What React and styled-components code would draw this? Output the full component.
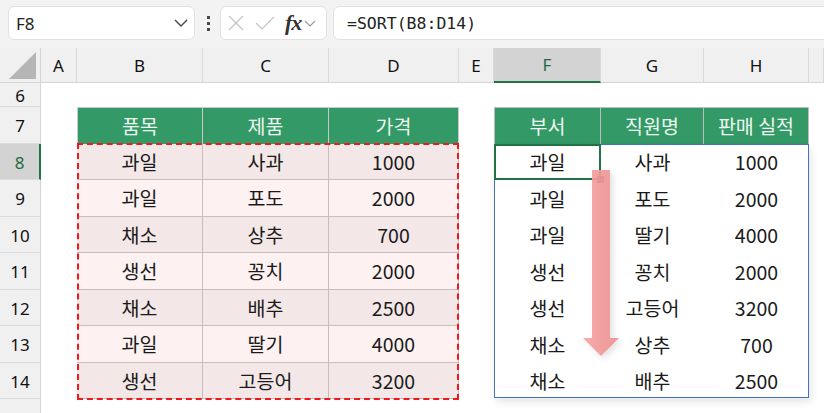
import styled, { createGlobalStyle, css } from "styled-components";

const GlobalStyle = createGlobalStyle`
  html, body {
    margin: 0;
    padding: 0;
    background: #ffffff;
    overflow: hidden;
  }
  body {
    font-family: "Noto Sans", "Noto Sans CJK KR", sans-serif;
  }
`;

const COLS = ["A", "B", "C", "D", "E", "F", "G", "H", ""];

const leftData = [
  ["과일", "사과", "1000"],
  ["과일", "포도", "2000"],
  ["채소", "상추", "700"],
  ["생선", "꽁치", "2000"],
  ["채소", "배추", "2500"],
  ["과일", "딸기", "4000"],
  ["생선", "고등어", "3200"],
];

const rightData = [
  ["과일", "사과", "1000"],
  ["과일", "포도", "2000"],
  ["과일", "딸기", "4000"],
  ["생선", "꽁치", "2000"],
  ["생선", "고등어", "3200"],
  ["채소", "상추", "700"],
  ["채소", "배추", "2500"],
];

const App = () => {
  const rows = [];
  for (let r = 6; r <= 15; r++) rows.push(r);

  const renderRow = (r) => {
    const cells = [];
    // row 15 is only a sliver at the bottom edge, its number sits below the window
    cells.push(
      <RowHead key={`rh${r}`} $selected={r === 8}>
        {r < 15 ? r : ""}
      </RowHead>
    );
    cells.push(<Blank key={`a${r}`} />);
    if (r === 7) {
      ["품목", "제품", "가격"].forEach((t, i) =>
        cells.push(
          <LeftHead key={`lh${i}`} $first={i === 0}>
            {t}
          </LeftHead>
        )
      );
    } else if (r >= 8 && r <= 14) {
      leftData[r - 8].forEach((t, i) =>
        cells.push(
          <LeftBody key={`lb${r}${i}`} $alt={(r - 8) % 2 === 1}>
            {t}
          </LeftBody>
        )
      );
    } else {
      for (let i = 0; i < 3; i++) cells.push(<Blank key={`bl${r}${i}`} />);
    }
    cells.push(<Blank key={`e${r}`} />);
    if (r === 7) {
      ["부서", "직원명", "판매 실적"].forEach((t, i) =>
        cells.push(
          <RightHead key={`rhh${i}`} $first={i === 0}>
            {t}
          </RightHead>
        )
      );
    } else if (r >= 8 && r <= 14) {
      rightData[r - 8].forEach((t, i) =>
        cells.push(<RightBody key={`rb${r}${i}`}>{t}</RightBody>)
      );
    } else {
      for (let i = 0; i < 3; i++) cells.push(<Blank key={`br${r}${i}`} />);
    }
    cells.push(<Blank key={`z${r}`} />);
    return cells;
  };

  return (
    <>
      <GlobalStyle />
      <Page>
        <TopBar>
          <NameBox>
            <span>F8</span>
            <svg width="14" height="8" viewBox="0 0 14 8">
              <path d="M1 1 L7 7 L13 1" fill="none" stroke="#444" strokeWidth="1.4" />
            </svg>
          </NameBox>
          <Dots>
            <i />
            <i />
            <i />
          </Dots>
          <FuncBox>
            <svg width="16" height="16" viewBox="0 0 16 16">
              <path d="M1 1 L15 15 M15 1 L1 15" stroke="#c4c4c4" strokeWidth="1.2" fill="none" />
            </svg>
            <svg width="20" height="14" viewBox="0 0 20 14">
              <path d="M1 7 L7 13 L19 1" stroke="#c4c4c4" strokeWidth="1.2" fill="none" />
            </svg>
            <Fx>fx</Fx>
            <svg width="12" height="7" viewBox="0 0 12 7">
              <path d="M1 1 L6 6 L11 1" fill="none" stroke="#999" strokeWidth="1.1" />
            </svg>
          </FuncBox>
          <FormulaBox>=SORT(B8:D14)</FormulaBox>
        </TopBar>

        <Sheet>
          <CellGrid>
            <Corner>
              <svg width="27" height="27" viewBox="0 0 27 27">
                <polygon points="27,0 27,27 0,27" fill="#b5b5b5" />
              </svg>
            </Corner>
            {COLS.map((c) => (
              <ColHead key={c || "I"} $selected={c === "F"}>
                {c}
              </ColHead>
            ))}
            {rows.map(renderRow)}
          </CellGrid>

          <OverlayGrid>
            <DashedFrame />
            <BlueFrame />
            <SelectFrame>
              <Handle />
            </SelectFrame>
          </OverlayGrid>
        </Sheet>

        <Arrow width="40" height="192" viewBox="0 0 40 192">
          <defs>
            <linearGradient id="shaft" x1="0" x2="1" y1="0" y2="0">
              <stop offset="0" stopColor="#f7a3a3" />
              <stop offset="1" stopColor="#ee9191" />
            </linearGradient>
          </defs>
          <polygon
            points="11,0 29,0 29,168 38,168 20,186 2,168 11,168"
            fill="url(#shaft)"
            fillOpacity="0.92"
          />
        </Arrow>
      </Page>
    </>
  );
};

export default App;

const Page = styled.div`
  position: relative;
  width: 824px;
  height: 413px;
  overflow: hidden;
  background: #ffffff;
  color: #1a1a1a;
`;

const TopBar = styled.div`
  display: flex;
  align-items: center;
  height: 48px;
  padding: 0 0 2px 8px;
  box-sizing: border-box;
  background: #f3f3f3;
`;

const NameBox = styled.div`
  display: flex;
  align-items: center;
  justify-content: space-between;
  width: 187px;
  height: 34px;
  box-sizing: border-box;
  padding: 0 6px 0 7px;
  background: #ffffff;
  border: 1px solid #e1e1e1;
  border-radius: 6px;
  font-size: 17px;
  color: #222;
`;

const Dots = styled.div`
  display: flex;
  flex-direction: column;
  gap: 3px;
  margin: 0 10px 0 12px;

  i {
    display: block;
    width: 3px;
    height: 3px;
    background: #4a4a4a;
  }
`;

const FuncBox = styled.div`
  display: flex;
  align-items: center;
  width: 107px;
  height: 34px;
  box-sizing: border-box;
  padding: 0 2px 0 7px;
  background: #ffffff;
  border: 1px solid #e1e1e1;
  border-radius: 6px;

  svg:nth-child(1) {
    margin-right: 11px;
  }
  svg:nth-child(2) {
    margin-right: 10px;
  }
`;

const Fx = styled.span`
  font-family: "Liberation Serif", "DejaVu Serif", serif;
  font-style: italic;
  font-weight: bold;
  font-size: 22px;
  line-height: 1;
  color: #333;
  margin-right: 3px;
  letter-spacing: -1px;
`;

const FormulaBox = styled.div`
  flex: 1;
  display: flex;
  align-items: center;
  height: 34px;
  box-sizing: border-box;
  margin-left: 6px;
  margin-right: -12px;
  padding-left: 13px;
  background: #ffffff;
  border: 1px solid #e1e1e1;
  border-radius: 6px;
  font-family: "DejaVu Sans Mono", "Liberation Mono", monospace;
  font-size: 16.5px;
  color: #222;
`;

const gridTemplate = css`
  display: grid;
  grid-template-columns: 41px 36px 126px 126px 130px 35px 107px 103px 105px 1fr;
  grid-template-rows: 35px 24px repeat(9, 36.5px);
`;

const Sheet = styled.div`
  display: grid;
  font-family: "Noto Sans CJK KR", "Noto Sans", sans-serif;
`;

const CellGrid = styled.div`
  ${gridTemplate};
  grid-area: 1 / 1;
`;

const OverlayGrid = styled.div`
  ${gridTemplate};
  grid-area: 1 / 1;
  pointer-events: none;
  z-index: 1;
`;

const Corner = styled.div`
  display: flex;
  align-items: flex-end;
  justify-content: flex-end;
  padding: 0 4px 3px 0;
  box-sizing: border-box;
  background: #f0f0f0;
  border-right: 1px solid #d4d4d4;
  border-bottom: 1px solid #d4d4d4;
`;

const ColHead = styled.div`
  display: flex;
  align-items: center;
  justify-content: center;
  box-sizing: border-box;
  font-family: "Noto Sans", sans-serif;
  font-size: 17px;
  background: ${(p) => (p.$selected ? "#d3d3d3" : "#f0f0f0")};
  color: ${(p) => (p.$selected ? "#1d6b40" : "#111")};
  border-right: 1px solid #d9d9d9;
  border-bottom: ${(p) => (p.$selected ? "2px solid #217346" : "1px solid #d4d4d4")};
`;

const RowHead = styled.div`
  display: flex;
  align-items: center;
  justify-content: center;
  box-sizing: border-box;
  padding-top: 2px;
  font-family: "Noto Sans", sans-serif;
  font-size: 17px;
  background: ${(p) => (p.$selected ? "#d3d3d3" : "#f0f0f0")};
  color: ${(p) => (p.$selected ? "#1d6b40" : "#111")};
  border-right: ${(p) => (p.$selected ? "2px solid #217346" : "1px solid #d4d4d4")};
  border-bottom: 1px solid #dcdcdc;
`;

const Blank = styled.div`
  background: #ffffff;
`;

const CellBase = styled.div`
  display: flex;
  align-items: center;
  justify-content: center;
  box-sizing: border-box;
  font-size: 19.5px;
  line-height: 1;
  white-space: nowrap;
`;

const LeftHead = styled(CellBase)`
  background: #339966;
  color: #eef8f1;
  border-top: 1px solid #c9c9c9;
  border-right: 1px solid #c9c9c9;
  border-left: ${(p) => (p.$first ? "1px solid #c9c9c9" : "none")};
`;

const LeftBody = styled(CellBase)`
  background: ${(p) => (p.$alt ? "#fdf1f1" : "#f4e7e7")};
  border-right: 1px solid #cbbcbc;
  border-bottom: 1px solid #cbbcbc;
`;

const RightHead = styled(CellBase)`
  background: #339966;
  color: #eef8f1;
  border-top: 1px solid #bdbdbd;
  border-right: 1px solid #bdbdbd;
  border-left: ${(p) => (p.$first ? "1px solid #bdbdbd" : "none")};
`;

const RightBody = styled(CellBase)`
  background: #ffffff;
`;

const DashedFrame = styled.div`
  grid-column: 3 / 6;
  grid-row: 4 / 11;
  border: 2px dashed #f01818;
  margin: -1px 0 -1px 0;
`;

const BlueFrame = styled.div`
  grid-column: 7 / 10;
  grid-row: 4 / 11;
  border: 1px solid #4472c4;
  margin-bottom: 1px;
  box-shadow: 2px 4px 8px rgba(0, 0, 0, 0.1);
`;

const SelectFrame = styled.div`
  grid-column: 7 / 8;
  grid-row: 4 / 5;
  position: relative;
  border: 2px solid #217346;
  z-index: 3;
`;

const Handle = styled.div`
  position: absolute;
  right: -5px;
  bottom: -5px;
  width: 7px;
  height: 7px;
  background: #6a4620;
`;

const Arrow = styled.svg`
  position: absolute;
  left: 581px;
  top: 170px;
  z-index: 2;
  filter: drop-shadow(3px 3px 3px rgba(0, 0, 0, 0.12));
`;
